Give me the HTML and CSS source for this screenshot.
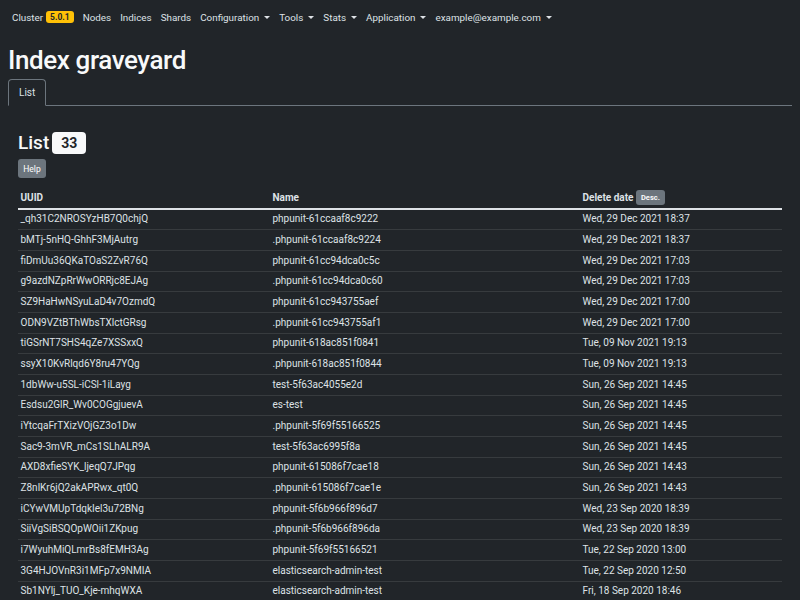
FILE: index.html
```html
<!DOCTYPE html>
<html>
<head>
<meta charset="utf-8">
<link rel="stylesheet" href="styles.css">
</head>
<body>
<nav class="navbar">
  <a class="nav-link">Cluster<span class="badge-warn">5.0.1</span></a>
  <a class="nav-link">Nodes</a>
  <a class="nav-link">Indices</a>
  <a class="nav-link">Shards</a>
  <a class="nav-link dd">Configuration</a>
  <a class="nav-link dd">Tools</a>
  <a class="nav-link dd">Stats</a>
  <a class="nav-link dd">Application</a>
  <a class="nav-link dd">example@example.com</a>
</nav>
<main class="container">
  <h1 class="title">Index graveyard</h1>
  <div class="tabs"><span class="tab">List</span></div>
  <section class="content">
    <h3 class="list-title">List <span class="badge-light">33</span></h3>
    <button class="btn-help">Help</button>
    <table class="table">
      <thead>
        <tr><th class="c1">UUID</th><th class="c2">Name</th><th>Delete date <span class="badge-sec">Desc.</span></th></tr>
      </thead>
      <tbody>
        <tr><td>_qh31C2NROSYzHB7Q0chjQ</td><td>phpunit-61ccaaf8c9222</td><td>Wed, 29 Dec 2021 18:37</td></tr>
        <tr><td>bMTj-5nHQ-GhhF3MjAutrg</td><td>.phpunit-61ccaaf8c9224</td><td>Wed, 29 Dec 2021 18:37</td></tr>
        <tr><td>fiDmUu36QKaTOaS2ZvR76Q</td><td>phpunit-61cc94dca0c5c</td><td>Wed, 29 Dec 2021 17:03</td></tr>
        <tr><td>g9azdNZpRrWwORRjc8EJAg</td><td>.phpunit-61cc94dca0c60</td><td>Wed, 29 Dec 2021 17:03</td></tr>
        <tr><td>SZ9HaHwNSyuLaD4v7OzmdQ</td><td>phpunit-61cc943755aef</td><td>Wed, 29 Dec 2021 17:00</td></tr>
        <tr><td>ODN9VZtBThWbsTXlctGRsg</td><td>.phpunit-61cc943755af1</td><td>Wed, 29 Dec 2021 17:00</td></tr>
        <tr><td>tiGSrNT7SHS4qZe7XSSxxQ</td><td>phpunit-618ac851f0841</td><td>Tue, 09 Nov 2021 19:13</td></tr>
        <tr><td>ssyX10KvRlqd6Y8ru47YQg</td><td>.phpunit-618ac851f0844</td><td>Tue, 09 Nov 2021 19:13</td></tr>
        <tr><td>1dbWw-u5SL-iCSl-1iLayg</td><td>test-5f63ac4055e2d</td><td>Sun, 26 Sep 2021 14:45</td></tr>
        <tr><td>Esdsu2GlR_Wv0COGgjuevA</td><td>es-test</td><td>Sun, 26 Sep 2021 14:45</td></tr>
        <tr><td>iYtcqaFrTXizVOjGZ3o1Dw</td><td>.phpunit-5f69f55166525</td><td>Sun, 26 Sep 2021 14:45</td></tr>
        <tr><td>Sac9-3mVR_mCs1SLhALR9A</td><td>test-5f63ac6995f8a</td><td>Sun, 26 Sep 2021 14:45</td></tr>
        <tr><td>AXD8xfieSYK_ljeqQ7JPqg</td><td>phpunit-615086f7cae18</td><td>Sun, 26 Sep 2021 14:43</td></tr>
        <tr><td>Z8nlKr6jQ2akAPRwx_qt0Q</td><td>.phpunit-615086f7cae1e</td><td>Sun, 26 Sep 2021 14:43</td></tr>
        <tr><td>iCYwVMUpTdqkIel3u72BNg</td><td>phpunit-5f6b966f896d7</td><td>Wed, 23 Sep 2020 18:39</td></tr>
        <tr><td>SiiVgSiBSQOpWOii1ZKpug</td><td>.phpunit-5f6b966f896da</td><td>Wed, 23 Sep 2020 18:39</td></tr>
        <tr><td>i7WyuhMiQLmrBs8fEMH3Ag</td><td>phpunit-5f69f55166521</td><td>Tue, 22 Sep 2020 13:00</td></tr>
        <tr><td>3G4HJOVnR3i1MFp7x9NMIA</td><td>elasticsearch-admin-test</td><td>Tue, 22 Sep 2020 12:50</td></tr>
        <tr><td>Sb1NYlj_TUO_Kje-mhqWXA</td><td>elasticsearch-admin-test</td><td>Fri, 18 Sep 2020 18:46</td></tr>
      </tbody>
    </table>
  </section>
</main>
</body>
</html>
```

FILE: styles.css
```css
* { box-sizing: border-box; }
html, body { margin: 0; padding: 0; }
body {
  background: #212529;
  color: #dee2e6;
  font-family: Roboto, "Liberation Sans", sans-serif;
  font-size: 10px;
  overflow: hidden;
  height: 600px;
}
.navbar {
  display: flex;
  align-items: center;
  height: 34px;
  padding: 0 12px;
  gap: 9px;
  font-size: 9.85px;
}
.nav-link { color: #dee2e6; display: inline-flex; align-items: center; white-space: nowrap; }
.dd::after {
  content: "";
  display: inline-block;
  margin-left: 5px;
  border-top: 3.5px solid #dee2e6;
  border-left: 3px solid transparent;
  border-right: 3px solid transparent;
}
.badge-warn {
  background: #ffc107;
  color: #212529;
  font-weight: 700;
  font-size: 8.5px;
  line-height: 12px;
  padding: 0 4px;
  border-radius: 3px;
  margin-left: 3px;
}
.container { padding: 0 8px; }
.title {
  margin: 10px 0 3px;
  font-size: 26px;
  letter-spacing: -0.4px;
  font-weight: 500;
  color: #f8f9fa;
  line-height: 32px;
}
.tabs {
  display: flex;
  border-bottom: 1px solid #6c757d;
}
.tab {
  margin-bottom: -1px;
  border: 1px solid #6c757d;
  border-bottom-color: #212529;
  border-radius: 4px 4px 0 0;
  padding: 6.5px 10px;
  font-size: 10px;
  line-height: 12px;
  color: #dee2e6;
  background: #212529;
}
.content { padding: 26px 10px 0; }
.list-title {
  margin: 0;
  font-size: 19px;
  font-weight: 500;
  display: flex;
  align-items: center;
  gap: 3px;
  color: #f8f9fa;
  line-height: 22px;
}
.badge-light {
  background: #f8f9fa;
  color: #212529;
  font-size: 14px;
  font-weight: 700;
  padding: 0 9px;
  line-height: 22px;
  border-radius: 4px;
}
.btn-help {
  display: block;
  margin-top: 5px;
  background: #6c757d;
  border: none;
  color: #fff;
  font-family: inherit;
  font-size: 8.5px;
  padding: 0;
  width: 28px;
  border-radius: 3px;
  height: 19px;
}
.table {
  margin-top: 10px;
  width: 764px;
  border-collapse: collapse;
  font-size: 10px;
}
.table th, .table td {
  text-align: left;
  padding: 2.5px 2.5px;
  line-height: 14.67px;
  border-bottom: 1px solid #373b3e;
  white-space: nowrap;
}
.table th { font-weight: 700; border-bottom: 2px solid #dee2e6; }
.c1 { width: 252px; }
.c2 { width: 310px; }
.badge-sec {
  background: #6c757d;
  color: #f8f9fa;
  font-size: 7.5px;
  font-weight: 700;
  padding: 3px 5px;
  border-radius: 3px;
  vertical-align: middle;
}
```
